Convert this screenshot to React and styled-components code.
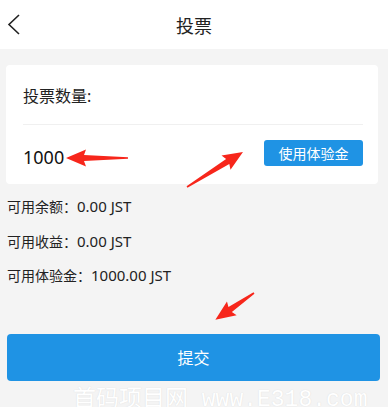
import React from "react"
import styled, { createGlobalStyle } from "styled-components"

const GlobalStyle = createGlobalStyle`
  html, body {
    margin: 0;
    padding: 0;
    background: #f4f4f4;
    font-family: "Noto Sans", "Noto Sans CJK SC", sans-serif;
  }
`

const Page = styled.div`
  position: relative;
  width: 388px;
  height: 407px;
  overflow: hidden;
  background: #f4f4f4;
`

const Header = styled.div`
  height: 49px;
  background: #fff;
  display: flex;
  align-items: center;
  justify-content: center;
  position: relative;
`

const BackButton = styled.div`
  position: absolute;
  left: 7px;
  top: 14px;
  width: 14px;
  height: 21px;
  display: flex;
`

const Title = styled.h1`
  margin: 0;
  font-size: 18px;
  font-weight: 400;
  color: #222;
`

const Card = styled.div`
  margin: 16px 10px 0 6px;
  background: #fff;
  border-radius: 4px;
  padding: 0 15px 0 17px;
`

const Label = styled.div`
  height: 60px;
  display: flex;
  align-items: center;
  font-size: 16px;
  color: #222;
  border-bottom: 1px solid #f0f0f0;
  padding-top: 1px;
  box-sizing: border-box;
`

const AmountRow = styled.div`
  height: 59px;
  display: flex;
  align-items: center;
  justify-content: space-between;
`

const Amount = styled.span`
  font-size: 18px;
  color: #111;
  padding-top: 4px;
`

const SmallButton = styled.button`
  width: 99px;
  height: 26px;
  border: none;
  border-radius: 3px;
  background: #1f93e4;
  color: #fff;
  font-family: inherit;
  font-size: 14px;
  padding: 0;
  margin-top: -4px;
`

const InfoList = styled.div`
  padding: 5px 0 0 7px;
  display: flex;
  flex-direction: column;
`

const InfoLine = styled.div`
  height: 34.5px;
  display: flex;
  align-items: center;
  font-size: 14px;
  color: #222;
`

const Value = styled.span`
  font-size: 15px;
`

const Submit = styled.button`
  display: block;
  margin: 41px 8px 0 7px;
  width: 373px;
  height: 47px;
  border: none;
  border-radius: 4px;
  background: #1f93e4;
  color: #fff;
  font-family: inherit;
  font-size: 16px;
`

const Watermark = styled.div`
  position: absolute;
  left: 73px;
  top: 379px;
  font-family: "Liberation Mono", "Noto Sans CJK SC", monospace;
  font-size: 23px;
  color: #fff;
  white-space: nowrap;
  text-shadow: 0 0 1px rgba(170, 170, 170, 0.4);
`

const Overlay = styled.svg`
  position: absolute;
  left: 0;
  top: 0;
  pointer-events: none;
`

const arrows = [
  { x: 128, y: 158, len: 62, angle: 180 },
  { x: 187, y: 187, len: 66, angle: -32 },
  { x: 254, y: 293, len: 47, angle: 145.3 },
]

const Arrow = ({ x, y, len, angle }) => {
  const h = 18
  const pts = [
    [0, -0.8],
    [len - h, -3],
    [len - h - 2, -8.5],
    [len, 0],
    [len - h - 2, 8.5],
    [len - h, 3],
    [0, 0.8],
  ]
    .map(p => p.join(","))
    .join(" ")
  return (
    <polygon
      points={pts}
      fill="#f7261b"
      transform={`translate(${x} ${y}) rotate(${angle})`}
    />
  )
}

const infos = [
  ["可用余额", "0.00 JST"],
  ["可用收益", "0.00 JST"],
  ["可用体验金", "1000.00 JST"],
]

export default function App() {
  return (
    <Page>
      <GlobalStyle />
      <Header>
        <BackButton>
          <svg width="14" height="21" viewBox="0 0 14 21">
            <polyline
              points="12,1 2,10.5 12,20"
              fill="none"
              stroke="#222"
              strokeWidth="1.6"
            />
          </svg>
        </BackButton>
        <Title>投票</Title>
      </Header>
      <Card>
        <Label>投票数量:</Label>
        <AmountRow>
          <Amount>1000</Amount>
          <SmallButton>使用体验金</SmallButton>
        </AmountRow>
      </Card>
      <InfoList>
        {infos.map(([k, v]) => (
          <InfoLine key={k}>
            {k}：<Value>{v}</Value>
          </InfoLine>
        ))}
      </InfoList>
      <Submit>提交</Submit>
      <Watermark>首码项目网 www.E318.com</Watermark>
      <Overlay width="388" height="407">
        {arrows.map((a, i) => (
          <Arrow key={i} {...a} />
        ))}
      </Overlay>
    </Page>
  )
}
